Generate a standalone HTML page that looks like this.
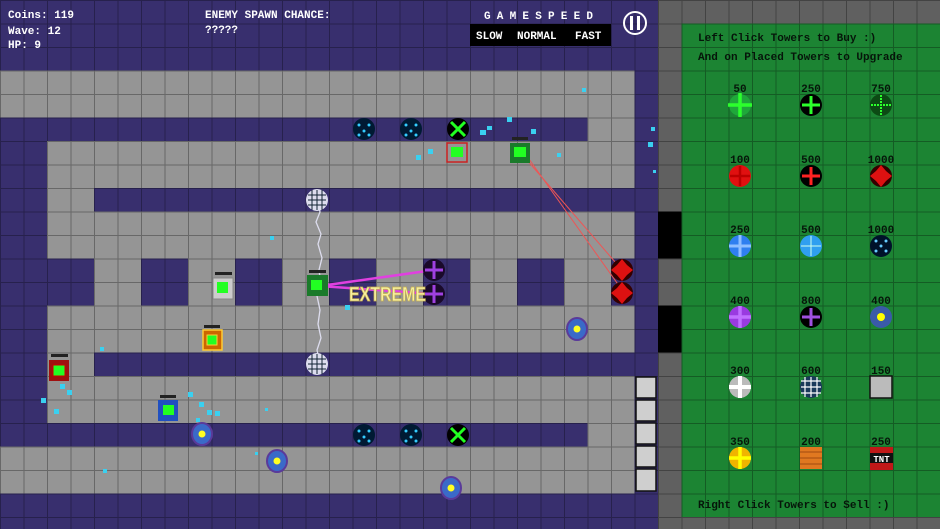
<!DOCTYPE html>
<html><head><meta charset="utf-8"><style>
html,body{margin:0;padding:0;width:940px;height:529px;overflow:hidden;background:#3a3170}
svg{display:block}
text{font-family:"Liberation Mono",monospace;font-weight:bold}
.dk text{fill:#06160a}
</style></head><body>
<svg width="940" height="529" viewBox="0 0 940 529" xmlns="http://www.w3.org/2000/svg">
<defs>
<pattern id="g" x="0" y="0" width="23.5" height="23.5" patternUnits="userSpaceOnUse">
<path d="M0 0H23.5M0 0V23.5" stroke="#000" stroke-opacity="0.3" stroke-width="2" fill="none"/>
</pattern>
</defs>
<rect width="940" height="529" fill="#382f6e"/>
<g fill="#959595">
<rect x="0" y="70.5" width="634.5" height="47"/>
<rect x="587.5" y="117.5" width="47" height="23.5"/>
<rect x="47" y="141" width="587.5" height="47"/>
<rect x="47" y="188" width="47" height="23.5"/>
<rect x="47" y="211.5" width="587.5" height="47"/>
<rect x="94" y="258.5" width="47" height="47"/>
<rect x="188" y="258.5" width="47" height="47"/>
<rect x="282" y="258.5" width="47" height="47"/>
<rect x="376" y="258.5" width="47" height="47"/>
<rect x="470" y="258.5" width="47" height="47"/>
<rect x="564" y="258.5" width="47" height="47"/>
<rect x="47" y="305.5" width="587.5" height="47"/>
<rect x="47" y="352.5" width="47" height="23.5"/>
<rect x="47" y="376" width="587.5" height="47"/>
<rect x="587.5" y="423" width="47" height="23.5"/>
<rect x="0" y="446.5" width="634.5" height="47"/>
</g>
<rect x="658" y="0" width="282" height="529" fill="#606060"/>
<rect x="658" y="211.5" width="23.5" height="47" fill="#000"/>
<rect x="658" y="305.5" width="23.5" height="47" fill="#000"/>
<rect x="681.5" y="23.5" width="258.5" height="493.5" fill="#1c8433"/>
<rect width="940" height="529" fill="url(#g)"/>
<g fill="#cfcfcf" stroke="#111" stroke-width="1.5">
<rect x="636" y="377" width="20" height="21"/><rect x="636" y="400" width="20" height="21"/>
<rect x="636" y="423" width="20" height="21"/><rect x="636" y="446" width="20" height="21"/><rect x="636" y="469" width="20" height="22"/>
</g>
<g fill="#fff" font-size="11">
<text x="8" y="18">Coins: 119</text>
<text x="8" y="34">Wave: 12</text>
<text x="8" y="48">HP: 9</text>
<text x="205" y="18">ENEMY SPAWN CHANCE:</text>
<text x="205" y="33">?????</text>
<text x="484" y="19" letter-spacing="6.2">GAMESPEED</text>
</g>
<rect x="470" y="24" width="141" height="22" fill="#000"/>
<text x="476" y="39" fill="#fff" font-size="11">SLOW</text>
<text x="517" y="39" fill="#fff" font-size="11">NORMAL</text>
<text x="575" y="39" fill="#fff" font-size="11">FAST</text>
<circle cx="635" cy="23" r="11" fill="none" stroke="#fff" stroke-width="2"/>
<rect x="630" y="16" width="3" height="14" fill="#fff"/><rect x="637" y="16" width="3" height="14" fill="#fff"/>
<g class="dk" font-size="11">
<text x="698" y="41">Left Click Towers to Buy :)</text>
<text x="698" y="60">And on Placed Towers to Upgrade</text>
<text x="698" y="508">Right Click Towers to Sell :)</text>
</g>
<g class="dk" font-size="11" text-anchor="middle">
<text x="740" y="92">50</text><text x="811" y="92">250</text><text x="881" y="92">750</text>
<text x="740" y="163">100</text><text x="811" y="163">500</text><text x="881" y="163">1000</text>
<text x="740" y="233">250</text><text x="811" y="233">500</text><text x="881" y="233">1000</text>
<text x="740" y="304">400</text><text x="811" y="304">800</text><text x="881" y="304">400</text>
<text x="740" y="374">300</text><text x="811" y="374">600</text><text x="881" y="374">150</text>
<text x="740" y="445">350</text><text x="811" y="445">200</text><text x="881" y="445">250</text>
</g>
<g stroke-width="3.5">
<circle cx="740" cy="105" r="11" fill="#1fa83a"/><path d="M728 105h24M740 93v24" stroke="#2cff2c"/>
<circle cx="811" cy="105" r="11" fill="#000"/><path d="M802 105h18M811 96v18" stroke="#2cff2c" stroke-width="3"/>
<circle cx="881" cy="105" r="11" fill="#0c4a14"/><path d="M871 105h20M881 95v20" stroke="#2cff2c" stroke-width="2" stroke-dasharray="2 1"/>
<circle cx="740" cy="176" r="11" fill="#e01010"/><path d="M730 176h20M740 166v20" stroke="#b00" stroke-width="2.5"/>
<circle cx="811" cy="176" r="11" fill="#000"/><path d="M802 176h18M811 167v18" stroke="#f22" stroke-width="3"/>
<circle cx="881" cy="176" r="11" fill="#300"/><path d="M881 165l5 6 6 5-6 5-5 6-5-6-6-5 6-5z" fill="#d11" stroke="none"/>
<circle cx="740" cy="246" r="11" fill="#2f7ff0"/><path d="M729 246h22M740 235v22" stroke="#8fbfff" stroke-width="3"/>
<circle cx="811" cy="246" r="11" fill="#2f9ff0"/><path d="M801 246h20M811 236v20" stroke="#cfe" stroke-width="1"/>
<circle cx="881" cy="246" r="11" fill="#00122a"/>
<circle cx="740" cy="317" r="11" fill="#9a3ae0"/><path d="M729 317h22M740 306v22" stroke="#c070ff"/>
<circle cx="811" cy="317" r="11" fill="#000"/><path d="M802 317h18M811 308v18" stroke="#a050e0" stroke-width="3"/>
<circle cx="881" cy="317" r="11" fill="#3a5aa8"/><circle cx="881" cy="317" r="4" fill="#ff0"/>
<circle cx="740" cy="387" r="11" fill="#bbb"/><path d="M729 387h22M740 376v22" stroke="#fff" stroke-width="4"/>
<circle cx="811" cy="387" r="11" fill="#1a3a5a"/><path d="M801 381h20M801 387h20M801 393h20M805 377v20M811 377v20M817 377v20" stroke="#fff" stroke-width="1.2"/>
<rect x="870" y="376" width="22" height="22" fill="#bbb" stroke="#111" stroke-width="1.5"/>
<circle cx="740" cy="458" r="11" fill="#f0b400"/><path d="M729 458h22M740 447v22" stroke="#ff0" stroke-width="3.5"/>
<rect x="800" y="447" width="22" height="22" fill="#e07820"/><path d="M800 452h22M800 458h22M800 464h22" stroke="#a04a10" stroke-width="1"/>
<rect x="870" y="447" width="23" height="23" fill="#c01818"/><rect x="870" y="453" width="23" height="10" fill="#111"/>
</g>
<text x="881.5" y="462" fill="#fff" font-size="9" text-anchor="middle">TNT</text>
<g fill="#6cf">
<circle cx="876" cy="241" r="1.5"/><circle cx="886" cy="241" r="1.5"/><circle cx="881" cy="246" r="1.5"/><circle cx="876" cy="251" r="1.5"/><circle cx="886" cy="251" r="1.5"/>
</g>
<g>
<line x1="520" y1="152" x2="622" y2="270" stroke="#e55" stroke-width="1"/>
<line x1="524" y1="152" x2="622" y2="290" stroke="#e55" stroke-width="1"/>
<line x1="320" y1="286" x2="434" y2="270" stroke="#e040e0" stroke-width="2.5"/>
<line x1="320" y1="286" x2="434" y2="294" stroke="#e040e0" stroke-width="2.5"/>
<path d="M317 200l3 12-4 10 5 12-3 10 4 14-3 12 2 14-4 12 3 14-2 14 3 14-4 12 3 14" stroke="#dde" stroke-width="1.3" fill="none"/>
<circle cx="364" cy="129" r="11" fill="#001a33"/><circle cx="411" cy="129" r="11" fill="#001a33"/>
<circle cx="458" cy="129" r="11" fill="#000"/><path d="M451 122l14 14M465 122l-14 14" stroke="#2f2" stroke-width="3"/>
<circle cx="364" cy="435" r="11" fill="#001a33"/><circle cx="411" cy="435" r="11" fill="#001a33"/>
<circle cx="458" cy="435" r="11" fill="#000"/><path d="M451 428l14 14M465 428l-14 14" stroke="#2f2" stroke-width="3"/>
<g fill="#3cf"><circle cx="359" cy="125" r="1.5"/><circle cx="369" cy="125" r="1.5"/><circle cx="364" cy="131" r="1.5"/><circle cx="359" cy="135" r="1.5"/><circle cx="369" cy="135" r="1.5"/>
<circle cx="406" cy="125" r="1.5"/><circle cx="416" cy="125" r="1.5"/><circle cx="411" cy="131" r="1.5"/><circle cx="406" cy="135" r="1.5"/><circle cx="416" cy="135" r="1.5"/>
<circle cx="359" cy="431" r="1.5"/><circle cx="369" cy="431" r="1.5"/><circle cx="364" cy="437" r="1.5"/><circle cx="359" cy="441" r="1.5"/><circle cx="369" cy="441" r="1.5"/>
<circle cx="406" cy="431" r="1.5"/><circle cx="416" cy="431" r="1.5"/><circle cx="411" cy="437" r="1.5"/><circle cx="406" cy="441" r="1.5"/><circle cx="416" cy="441" r="1.5"/></g>
<rect x="447" y="143" width="20" height="19" fill="none" stroke="#c22" stroke-width="1.5"/><rect x="451" y="147" width="12" height="10" fill="#2f2"/>
<rect x="510" y="143" width="20" height="20" fill="#1a7a2a"/><rect x="514" y="147" width="12" height="10" fill="#2f2"/><rect x="512" y="137" width="16" height="3" fill="#222"/>
<circle cx="317" cy="200" r="11" fill="#dde"/><path d="M308 195h18M308 200h18M308 205h18M312 190v20M317 190v20M322 190v20" stroke="#123" stroke-width="1"/>
<circle cx="317" cy="364" r="11" fill="#dde"/><path d="M308 359h18M308 364h18M308 369h18M312 354v20M317 354v20M322 354v20" stroke="#123" stroke-width="1"/>
<rect x="307" y="275" width="21" height="21" fill="#1a7a2a"/><rect x="311" y="280" width="11" height="10" fill="#2f2"/><rect x="309" y="270" width="17" height="3" fill="#222"/>
<rect x="213" y="278" width="20" height="21" fill="#ccc" stroke="#888"/><rect x="217" y="282" width="11" height="11" fill="#2f2"/><rect x="215" y="272" width="17" height="3" fill="#222"/>
<rect x="203" y="330" width="19" height="20" fill="#c60" stroke="#fc3" stroke-width="1.5"/><rect x="207" y="335" width="10" height="10" fill="#2f2" stroke="#fc3"/><rect x="204" y="325" width="16" height="3" fill="#222"/>
<rect x="49" y="360" width="20" height="21" fill="#a01010"/><rect x="53" y="365" width="12" height="11" fill="#2f2" stroke="#c00"/><rect x="51" y="354" width="17" height="3" fill="#222"/>
<rect x="158" y="400" width="20" height="21" fill="#2050c0"/><rect x="163" y="405" width="11" height="10" fill="#2f2"/><rect x="160" y="395" width="16" height="3" fill="#222"/>
<circle cx="434" cy="270" r="11" fill="#1a0a2a"/><path d="M425 270h18M434 261v18" stroke="#a040e0" stroke-width="3"/>
<circle cx="434" cy="294" r="11" fill="#1a0a2a"/><path d="M425 294h18M434 285v18" stroke="#a040e0" stroke-width="3"/>
<circle cx="622" cy="270" r="11" fill="#300"/><path d="M622 259l5 6 6 5-6 5-5 6-5-6-6-5 6-5z" fill="#d11"/>
<circle cx="622" cy="293" r="11" fill="#300"/><path d="M622 282l5 6 6 5-6 5-5 6-5-6-6-5 6-5z" fill="#d11"/>
<text x="349" y="301" fill="#f6f0a0" font-size="20" stroke="#c8b050" stroke-width="0.8" textLength="77" lengthAdjust="spacingAndGlyphs" style="font-family:'Liberation Sans',sans-serif;font-weight:bold">EXTREME</text>
<g fill="#3a6ac8" stroke="#5a3a9a" stroke-width="2">
<ellipse cx="577" cy="329" rx="10" ry="11"/><ellipse cx="202" cy="434" rx="10" ry="11"/><ellipse cx="277" cy="461" rx="10" ry="11"/><ellipse cx="451" cy="488" rx="10" ry="11"/>
</g>
<g fill="#ff2"><circle cx="577" cy="329" r="3.5"/><circle cx="202" cy="434" r="3.5"/><circle cx="277" cy="461" r="3.5"/><circle cx="451" cy="488" r="3.5"/></g>
<g fill="#3ad0f0">
<rect x="582" y="88" width="4" height="4"/><rect x="531" y="129" width="5" height="5"/><rect x="480" y="130" width="6" height="5"/><rect x="487" y="126" width="5" height="4"/><rect x="507" y="117" width="5" height="5"/>
<rect x="416" y="155" width="5" height="5"/><rect x="428" y="149" width="5" height="5"/><rect x="557" y="153" width="4" height="4"/><rect x="651" y="127" width="4" height="4"/><rect x="648" y="142" width="5" height="5"/><rect x="653" y="170" width="3" height="3"/>
<rect x="270" y="236" width="4" height="4"/><rect x="345" y="305" width="5" height="5"/><rect x="100" y="347" width="4" height="4"/>
<rect x="60" y="384" width="5" height="5"/><rect x="67" y="390" width="5" height="5"/><rect x="41" y="398" width="5" height="5"/><rect x="54" y="409" width="5" height="5"/>
<rect x="188" y="392" width="5" height="5"/><rect x="199" y="402" width="5" height="5"/><rect x="207" y="410" width="5" height="5"/><rect x="215" y="411" width="5" height="5"/><rect x="196" y="418" width="4" height="4"/>
<rect x="103" y="469" width="4" height="4"/><rect x="255" y="452" width="3" height="3"/><rect x="265" y="408" width="3" height="3"/>
</g>
</g>
</svg>
</body></html>
